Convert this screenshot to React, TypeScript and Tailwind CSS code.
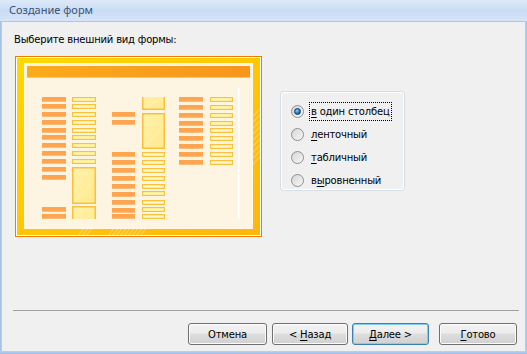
import { useState } from "react";

// превью макета формы "в один столбец"
const lab1 = [41, 48, 56, 64, 72, 79, 87, 95, 103, 111, 119, 151, 158];
const fld1 = [41, 48, 56, 64, 72, 79, 87, 95, 103];
const lab2 = [56, 64, 96, 104, 112, 120, 128, 136, 144, 152, 158];
const fld2 = [96, 104, 112, 120, 128, 135, 144, 151, 158];
const rows3 = [41, 49, 57, 65, 72, 80, 88, 96, 104];

function Label({ x, y, w }: { x: number; y: number; w: number }) {
  return (
    <g>
      <rect x={x} y={y} width={w} height={5} fill="#ffa54f" />
      <rect x={x} y={y + 4} width={w} height={1} fill="#ffbb7a" />
    </g>
  );
}

function Field({ x, y, w }: { x: number; y: number; w: number }) {
  return (
    <g>
      <rect x={x + 0.5} y={y + 0.5} width={w - 1} height={4} fill="#ffec96" stroke="#f8c13e" />
      <rect x={x + 2} y={y + 2} width={w - 4} height={1} fill="#fff7cc" />
    </g>
  );
}

function Box({ x, y, w, h }: { x: number; y: number; w: number; h: number }) {
  return (
    <g>
      <rect x={x + 0.75} y={y + 0.75} width={w - 1.5} height={h - 1.5} fill="url(#boxg)" stroke="#f8c03c" strokeWidth={1.5} />
      <line x1={x + 3} y1={y + h - 3} x2={x + w - 4} y2={y + h * 0.45} stroke="#ffffff" strokeOpacity={0.35} strokeWidth={1} />
    </g>
  );
}

function Preview() {
  return (
    <svg width={247} height={181} viewBox="0 0 247 181" className="block shrink-0">
      <defs>
        <linearGradient id="frameg" x1="0" y1="0" x2="1" y2="1">
          <stop offset="0" stopColor="#ffd800" />
          <stop offset="1" stopColor="#ffb60c" />
        </linearGradient>
        <linearGradient id="titleg" x1="0" y1="0" x2="1" y2="0">
          <stop offset="0" stopColor="#fcab1c" />
          <stop offset="1" stopColor="#f7951c" />
        </linearGradient>
        <linearGradient id="boxg" x1="0" y1="0" x2="1" y2="1">
          <stop offset="0" stopColor="#fff2ae" />
          <stop offset="1" stopColor="#ffe98a" />
        </linearGradient>
        <clipPath id="content">
          <rect x={10} y={41} width={227} height={122} />
        </clipPath>
        <clipPath id="frameClip">
          <path d="M2 2H245V179H2Z M10 8V172H237V8Z" fillRule="evenodd" />
        </clipPath>
      </defs>
      <rect x={0.5} y={0.5} width={246} height={180} fill="#ffffff" stroke="#f27c00" />
      <rect x={2} y={2} width={243} height={177} fill="url(#frameg)" />
      <g clipPath="url(#frameClip)" stroke="#ffffff" strokeOpacity={0.3} strokeWidth={1.2}>
        {[62, 66, 70, 92, 96, 100, 104, 108, 112, 116, 120, 124].map((x) => (
          <line key={x} x1={x} y1={181} x2={x + 9} y2={170} />
        ))}
        {[52, 58, 64, 70, 76, 82, 88, 94, 100].map((y) => (
          <line key={y} x1={236} y1={y + 10} x2={246} y2={y} />
        ))}
      </g>
      <rect x={9.5} y={7.5} width={228} height={165} fill="#fdf4e2" stroke="#fff8ea" />
      <rect x={12} y={10} width={223} height={12} fill="url(#titleg)" />
      <rect x={12} y={21} width={223} height={1} fill="#fbc46e" />
      <rect x={223} y={32} width={1.5} height={131} fill="#ffffff" />
      <g clipPath="url(#content)">
        {lab1.map((y) => <Label key={"a" + y} x={27} y={y} w={24} />)}
        {fld1.map((y) => <Field key={"b" + y} x={57} y={y} w={24} />)}
        <Box x={57} y={111} w={24} h={37} />
        <Box x={57} y={150} w={24} h={20} />
        {lab2.map((y) => <Label key={"c" + y} x={97} y={y} w={23} />)}
        <Box x={127} y={34} w={23} h={20} />
        <Box x={127} y={57} w={23} h={36} />
        {fld2.map((y) => <Field key={"d" + y} x={127} y={y} w={23} />)}
        {rows3.map((y) => <Label key={"e" + y} x={164} y={y} w={24} />)}
        {rows3.map((y) => <Field key={"f" + y} x={195} y={y} w={23} />)}
      </g>
    </svg>
  );
}

const options = [
  { pre: "", key: "в", post: " один столбец" },
  { pre: "", key: "л", post: "енточный" },
  { pre: "", key: "т", post: "абличный" },
  { pre: "в", key: "ы", post: "ровненный" },
];

function Radio({ checked }: { checked: boolean }) {
  return (
    <span className="relative flex h-[13px] w-[13px] shrink-0 items-center justify-center rounded-full border border-[#8f8f8f] bg-[linear-gradient(135deg,#d6d6d6,#f7f7f7)]">
      {checked && (
        <span className="h-[7px] w-[7px] rounded-full border border-[#0b3d6f] bg-[radial-gradient(circle_at_40%_35%,#8ed0ff,#1c6fc0_60%,#0c4a8a)]" />
      )}
    </span>
  );
}

function Button({ w, children, def }: { w: string; children: React.ReactNode; def?: boolean }) {
  return (
    <button
      className={`${w} h-[22px] rounded-[3px] border bg-[linear-gradient(#f3f3f3,#ececec_45%,#dedede_50%,#d0d0d0)] text-[10px] tracking-[-0.2px] text-black ${
        def ? "border-[#3c7fb1] shadow-[inset_0_0_0_1px_#7fd0f5]" : "border-[#707070] shadow-[inset_0_0_0_1px_#fbfbfb]"
      }`}
    >
      {children}
    </button>
  );
}

export default function App() {
  const [sel, setSel] = useState(0);
  return (
    <div className="flex h-[354px] w-[527px] flex-col overflow-hidden bg-[#f0f0f0] font-['Tahoma','DejaVu_Sans',sans-serif] text-[10px] tracking-[-0.2px] text-black">
      <div className="flex h-[22px] shrink-0 items-center border-b border-[#a9c8ed] bg-[linear-gradient(#dde9f9,#cadcf5_50%,#d5e4f7)] pl-[9px] font-['Segoe_UI','Noto_Sans',sans-serif] text-[11px] tracking-normal text-[#3b5678]">
        Создание форм
      </div>
      <div className="flex min-h-0 flex-1">
        <div className="w-[2px] shrink-0 bg-[linear-gradient(90deg,#9dbbe3,#bcd3f0)]" />
        <div className="flex min-w-0 flex-1 flex-col">
          <div className="ml-[12px] mt-[11px] leading-[13px]">Выберите внешний вид формы:</div>
          <div className="ml-[13px] mt-[10px] flex items-start">
            <Preview />
            <div className="ml-[18px] mt-[35px] h-[100px] w-[125px] rounded-[3px] border border-[#d5dfe5] pl-[10px] pt-[8px] shadow-[inset_0_0_0_1px_#ffffff]">
              {options.map((o, i) => (
                <div key={i} className="flex h-[23px] cursor-default items-center" onClick={() => setSel(i)}>
                  <Radio checked={sel === i} />
                  <span
                    className={`ml-[5px] border border-dotted px-[1px] py-[2px] leading-[13px] ${
                      sel === i ? "border-black" : "border-transparent"
                    }`}
                  >
                    {o.pre}
                    <span className="underline underline-offset-2">{o.key}</span>
                    {o.post}
                  </span>
                </div>
              ))}
            </div>
          </div>
          <div className="ml-[11px] mr-[6px] mt-[73px] h-px bg-[#a0a0a0]" />
          <div className="mt-[12px] flex justify-end pr-[8px]">
            <Button w="w-[79px]">Отмена</Button>
            <div className="w-[5px]" />
            <Button w="w-[76px]">
              &lt; <span className="underline underline-offset-2">Н</span>азад
            </Button>
            <div className="w-[4px]" />
            <Button w="w-[77px]" def>
              <span className="underline underline-offset-2">Д</span>алее &gt;
            </Button>
            <div className="w-[10px]" />
            <Button w="w-[78px]">
              <span className="underline underline-offset-2">Г</span>отово
            </Button>
          </div>
        </div>
        <div className="w-[2px] shrink-0 bg-[linear-gradient(90deg,#bcd3f0,#9dbbe3)]" />
      </div>
      <div className="h-[3px] shrink-0 bg-[linear-gradient(#bcd3f0,#9dbbe3)]" />
    </div>
  );
}
